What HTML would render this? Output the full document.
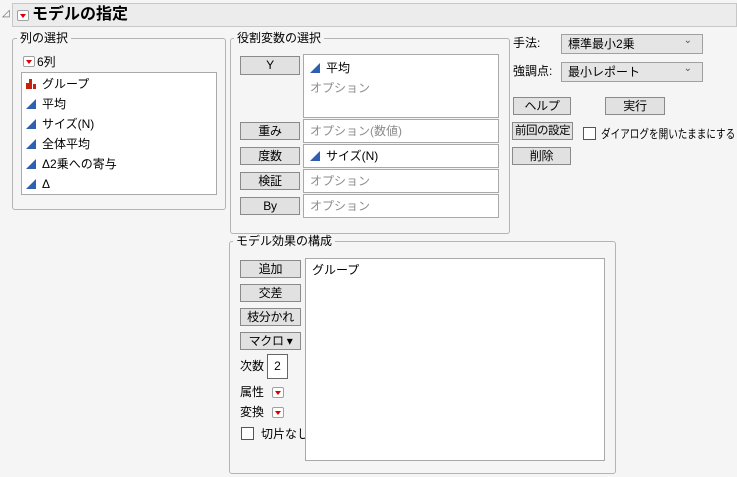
<!DOCTYPE html>
<html><head><meta charset="utf-8"><style>
body{margin:0;width:737px;height:477px;background:#f5f5f5;font-family:"Liberation Sans","Noto Sans CJK JP",sans-serif;font-size:12px;line-height:14px;color:#000;position:relative;overflow:hidden}
.a{position:absolute;white-space:nowrap}
.grp{position:absolute;border:1px solid #b4b4b4;border-radius:3px}
.lbl{position:absolute;background:#f5f5f5;padding:0 3px;line-height:14px}
.btn{position:absolute;background:#e1e1e1;border:1px solid #8a8a8a;box-sizing:border-box;text-align:center;line-height:16px;white-space:nowrap;letter-spacing:-0.3px}
.box{position:absolute;background:#fff;border:1px solid #a9a9a9;box-sizing:border-box;white-space:nowrap}
.ph{color:#8c8c8c}
.rb{position:absolute;width:12px;height:11px;border:1px solid #a0a0a0;background:#fff;box-sizing:border-box;border-radius:2px}
.rb:after{content:"";position:absolute;left:2px;top:3px;border-left:3.5px solid transparent;border-right:3.5px solid transparent;border-top:4px solid #d00}
.tri{display:inline-block;width:0;height:0;border-left:10px solid transparent;border-bottom:10px solid #2f5fb0;vertical-align:-1px;margin-right:6px}
.cb{position:absolute;width:13px;height:13px;border:1px solid #555;background:#fff;box-sizing:border-box}
.sel{position:absolute;background:#e5e5e5;border:1px solid #a0a0a0;box-sizing:border-box;padding-left:6px;line-height:18px}
.sel:after{content:"⌄";position:absolute;right:10px;top:-3px;font-size:10px;color:#555}
</style></head><body>
<div class="a" style="left:2px;top:7px;font-size:10px;color:#666">◿</div>
<div class="a" style="left:12px;top:3px;width:725px;height:24px;background:#ececec;border:1px solid #c8c8c8;box-sizing:border-box"></div>
<div class="rb" style="left:17px;top:10px"></div>
<div class="a" style="left:32px;top:6px;font-size:16px;font-weight:bold;line-height:18px">モデルの指定</div>

<div class="grp" style="left:12px;top:38px;width:212px;height:170px"></div>
<div class="lbl" style="left:17px;top:31px">列の選択</div>
<div class="rb" style="left:23px;top:56px"></div>
<div class="a" style="left:37px;top:55px">6列</div>
<div class="box" style="left:21px;top:72px;width:196px;height:123px"></div>
<div class="a" style="left:26px;top:74px;line-height:20px">
<div><span style="display:inline-block;width:10px;height:10px;margin-right:6px;position:relative;vertical-align:-1px"><span class="a" style="left:0;top:4px;width:3px;height:6px;background:#c8200e"></span><span class="a" style="left:3px;top:0;width:3px;height:10px;background:#c8200e"></span><span class="a" style="left:7px;top:5px;width:3px;height:5px;background:#c8200e"></span></span>グループ</div>
<div><span class="tri"></span>平均</div>
<div><span class="tri"></span>サイズ(N)</div>
<div><span class="tri"></span>全体平均</div>
<div><span class="tri"></span>Δ2乗への寄与</div>
<div><span class="tri"></span>Δ</div>
</div>

<div class="grp" style="left:230px;top:38px;width:278px;height:194px"></div>
<div class="lbl" style="left:234px;top:31px">役割変数の選択</div>
<div class="btn" style="left:240px;top:56px;width:60px;height:19px">Y</div>
<div class="btn" style="left:240px;top:122px;width:60px;height:18px">重み</div>
<div class="btn" style="left:240px;top:147px;width:60px;height:18px">度数</div>
<div class="btn" style="left:240px;top:172px;width:60px;height:18px">検証</div>
<div class="btn" style="left:240px;top:197px;width:60px;height:18px">By</div>
<div class="box" style="left:303px;top:54px;width:196px;height:64px;padding:3px 0 0 6px;line-height:20px"><div><span class="tri"></span>平均</div><div class="ph">オプション</div></div>
<div class="box ph" style="left:303px;top:119px;width:196px;height:24px;padding:2px 6px;line-height:19px">オプション(数値)</div>
<div class="box" style="left:303px;top:144px;width:196px;height:24px;padding:2px 6px;line-height:19px"><span class="tri"></span>サイズ(N)</div>
<div class="box ph" style="left:303px;top:169px;width:196px;height:24px;padding:2px 6px;line-height:19px">オプション</div>
<div class="box ph" style="left:303px;top:194px;width:196px;height:24px;padding:2px 6px;line-height:19px">オプション</div>

<div class="a" style="left:513px;top:36px">手法:</div>
<div class="sel" style="left:561px;top:34px;width:142px;height:20px">標準最小2乗</div>
<div class="a" style="left:513px;top:64px">強調点:</div>
<div class="sel" style="left:561px;top:62px;width:142px;height:20px">最小レポート</div>
<div class="btn" style="left:513px;top:97px;width:58px;height:18px">ヘルプ</div>
<div class="btn" style="left:605px;top:97px;width:60px;height:18px">実行</div>
<div class="btn" style="left:512px;top:122px;width:61px;height:18px;font-size:11.5px;letter-spacing:-0.5px">前回の設定</div>
<div class="cb" style="left:583px;top:127px"></div>
<div class="a" style="left:601px;top:127px;font-size:12px;transform:scaleX(0.8);transform-origin:0 0">ダイアログを開いたままにする</div>
<div class="btn" style="left:512px;top:147px;width:59px;height:18px">削除</div>

<div class="grp" style="left:229px;top:241px;width:385px;height:231px"></div>
<div class="lbl" style="left:233px;top:234px">モデル効果の構成</div>
<div class="btn" style="left:240px;top:260px;width:61px;height:18px">追加</div>
<div class="btn" style="left:240px;top:284px;width:61px;height:18px">交差</div>
<div class="btn" style="left:240px;top:308px;width:61px;height:18px">枝分かれ</div>
<div class="btn" style="left:240px;top:332px;width:61px;height:18px">マクロ ▾</div>
<div class="a" style="left:240px;top:359px">次数</div>
<div class="box" style="left:267px;top:354px;width:21px;height:25px;text-align:center;line-height:23px;border-color:#666">2</div>
<div class="a" style="left:240px;top:385px">属性</div>
<div class="rb" style="left:272px;top:387px"></div>
<div class="a" style="left:240px;top:405px">変換</div>
<div class="rb" style="left:272px;top:407px"></div>
<div class="cb" style="left:241px;top:427px"></div>
<div class="a" style="left:261px;top:427px">切片なし</div>
<div class="box" style="left:305px;top:258px;width:300px;height:203px;padding:2px 6px;line-height:18px">グループ</div>
</body></html>
